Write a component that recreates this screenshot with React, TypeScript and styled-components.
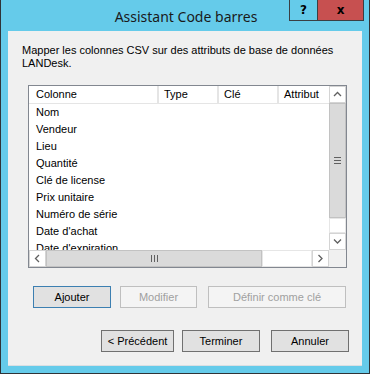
import React from "react";
import styled, { createGlobalStyle } from "styled-components";

const GlobalStyle = createGlobalStyle`
  html, body {
    margin: 0;
    padding: 0;
    background: #ffffff;
  }
  body {
    font-family: "Liberation Sans", Arial, sans-serif;
  }
`;

const Window = styled.div`
  box-sizing: border-box;
  width: 370px;
  height: 374px;
  background: #65cbea;
  border-left: 1px solid #2f3337;
  border-right: 1px solid #2f3337;
  border-bottom: 1px solid #2f3337;
  display: flex;
  flex-direction: column;
`;

const TitleBar = styled.div`
  height: 31px;
  flex: none;
  display: grid;
  grid-template-columns: 1fr auto 1fr;
  align-items: center;
`;

const Title = styled.div`
  grid-column: 2;
  font-family: "Noto Sans", "Open Sans", sans-serif;
  font-size: 14px;
  color: #1a1a1a;
  white-space: nowrap;
  padding: 1px 0 0 2px;
`;

const CaptionButtons = styled.div`
  grid-column: 3;
  justify-self: end;
  align-self: start;
  margin-right: 5px;
  display: flex;
`;

const CaptionButton = styled.div<{ $close?: boolean; $width: number }>`
  box-sizing: border-box;
  width: ${(p) => p.$width}px;
  height: 21px;
  border: 1px solid #3a3f44;
  border-top: none;
  margin-left: ${(p) => (p.$close ? "-1px" : "0")};
  background: ${(p) => (p.$close ? "#c75050" : "transparent")};
  display: flex;
  align-items: center;
  justify-content: center;
  font-family: "DejaVu Sans", sans-serif;
  font-weight: bold;
  font-size: 12px;
  color: #000;
`;

const Content = styled.div`
  flex: 1;
  margin: 0 7px 7px 7px;
  background: #f0f0f0;
  border-bottom: 1px solid #d9dfe3;
  padding: 13px 13px 0 14px;
  display: flex;
  flex-direction: column;
  font-size: 11px;
  color: #000;
`;

const Description = styled.div`
  line-height: 13px;
  width: 326px;
`;

const ListView = styled.div`
  box-sizing: border-box;
  margin: 15px 0 0 6px;
  width: 319px;
  height: 183px;
  border: 1px solid #828790;
  background: #fff;
  display: grid;
  grid-template-columns: 300px 17px;
  grid-template-rows: 164px 17px;
`;

const DataArea = styled.div`
  overflow: hidden;
`;

const HeaderRow = styled.div`
  display: flex;
  height: 18px;
  box-sizing: border-box;
  border-bottom: 1px solid #e5e5e5;
  white-space: nowrap;
`;

const HeaderCell = styled.div<{ $width?: number; $pad: number }>`
  box-sizing: border-box;
  flex: ${(p) => (p.$width ? `0 0 ${p.$width}px` : "1 0 60px")};
  padding-left: ${(p) => p.$pad}px;
  border-right: ${(p) => (p.$width ? "2px solid #e5e5e5" : "none")};
  line-height: 17px;
`;

const Row = styled.div`
  height: 17px;
  line-height: 17px;
  padding-left: 7px;
  white-space: nowrap;
`;

const VScroll = styled.div`
  display: flex;
  flex-direction: column;
  background: #fff;
`;

const HScroll = styled.div`
  display: flex;
  background: #fff;
`;

const ArrowButton = styled.div`
  box-sizing: border-box;
  flex: 0 0 17px;
  width: 17px;
  height: 17px;
  border: 1px solid #d4d4d4;
  background: #fff;
  display: flex;
  align-items: center;
  justify-content: center;
`;

const Thumb = styled.div<{ $size: number; $vertical?: boolean }>`
  box-sizing: border-box;
  flex: 0 0 ${(p) => p.$size}px;
  ${(p) => (p.$vertical ? "width: 17px;" : "height: 17px;")}
  background: #dadada;
  border: 1px solid #c2c2c2;
  display: flex;
  align-items: center;
  justify-content: center;
`;

const Track = styled.div`
  flex: 1;
  box-sizing: border-box;
  border: 1px solid #e6e6e6;
  background: #fff;
`;

const Corner = styled.div`
  background: #f0f0f0;
`;

const ButtonRow = styled.div<{ $end?: boolean; $top: number }>`
  display: flex;
  justify-content: ${(p) => (p.$end ? "flex-end" : "flex-start")};
  margin-top: ${(p) => p.$top}px;
  padding-left: ${(p) => (p.$end ? 0 : 11)}px;
`;

const Button = styled.div<{
  $width: number;
  $gap?: number;
  $variant?: "default" | "disabled" | "normal";
}>`
  box-sizing: border-box;
  width: ${(p) => p.$width}px;
  height: 22px;
  margin-left: ${(p) => p.$gap ?? 0}px;
  display: flex;
  align-items: center;
  justify-content: center;
  font-size: 11px;
  border: 1px solid
    ${(p) =>
      p.$variant === "default"
        ? "#3c7fb1"
        : p.$variant === "disabled"
        ? "#bfbfbf"
        : "#707070"};
  background: ${(p) => (p.$variant === "disabled" ? "#f4f4f4" : "#e1e1e1")};
  color: ${(p) => (p.$variant === "disabled" ? "#a0a0a0" : "#000")};
`;

const Chevron = ({ dir }: { dir: "up" | "down" | "left" | "right" }) => {
  const paths = {
    up: "M1 5 L4.5 1.5 L8 5",
    down: "M1 1.5 L4.5 5 L8 1.5",
    left: "M5 1 L1.5 4.5 L5 8",
    right: "M1.5 1 L5 4.5 L1.5 8",
  };
  const horizontal = dir === "up" || dir === "down";
  return (
    <svg
      width={horizontal ? 9 : 7}
      height={horizontal ? 7 : 9}
      viewBox={horizontal ? "0 0 9 7" : "0 0 7 9"}
    >
      <path d={paths[dir]} fill="none" stroke="#606060" strokeWidth="1.3" />
    </svg>
  );
};

const Grip = ({ vertical }: { vertical?: boolean }) => (
  <svg width={7} height={7} viewBox="0 0 7 7">
    {vertical
      ? [0.5, 3.5, 6.5].map((y) => (
          <line key={y} x1="0" x2="7" y1={y} y2={y} stroke="#606060" />
        ))
      : [0.5, 3.5, 6.5].map((x) => (
          <line key={x} y1="0" y2="7" x1={x} x2={x} stroke="#606060" />
        ))}
  </svg>
);

const rows = [
  "Nom",
  "Vendeur",
  "Lieu",
  "Quantité",
  "Clé de license",
  "Prix unitaire",
  "Numéro de série",
  "Date d'achat",
  "Date d'expiration",
];

export default function App() {
  return (
    <>
      <GlobalStyle />
      <Window>
        <TitleBar>
          <Title>Assistant Code barres</Title>
          <CaptionButtons>
            <CaptionButton $width={29}>?</CaptionButton>
            <CaptionButton $width={47} $close>
              x
            </CaptionButton>
          </CaptionButtons>
        </TitleBar>
        <Content>
          <Description>
            Mapper les colonnes CSV sur des attributs de base de données
            LANDesk.
          </Description>
          <ListView>
            <DataArea>
              <HeaderRow>
                <HeaderCell $width={130} $pad={7}>
                  Colonne
                </HeaderCell>
                <HeaderCell $width={60} $pad={5}>
                  Type
                </HeaderCell>
                <HeaderCell $width={60} $pad={5}>
                  Clé
                </HeaderCell>
                <HeaderCell $pad={5}>Attribut</HeaderCell>
              </HeaderRow>
              {rows.map((r) => (
                <Row key={r}>{r}</Row>
              ))}
            </DataArea>
            <VScroll>
              <ArrowButton>
                <Chevron dir="up" />
              </ArrowButton>
              <Thumb $size={115} $vertical>
                <Grip vertical />
              </Thumb>
              <Track />
              <ArrowButton>
                <Chevron dir="down" />
              </ArrowButton>
            </VScroll>
            <HScroll>
              <ArrowButton>
                <Chevron dir="left" />
              </ArrowButton>
              <Thumb $size={216}>
                <Grip />
              </Thumb>
              <Track />
              <ArrowButton>
                <Chevron dir="right" />
              </ArrowButton>
            </HScroll>
            <Corner />
          </ListView>
          <ButtonRow $top={18}>
            <Button $width={78} $variant="default">
              Ajouter
            </Button>
            <Button $width={77} $gap={9} $variant="disabled">
              Modifier
            </Button>
            <Button $width={138} $gap={11} $variant="disabled">
              Définir comme clé
            </Button>
          </ButtonRow>
          <ButtonRow $top={22} $end>
            <Button $width={73}>&lt; Précédent</Button>
            <Button $width={78} $gap={8}>
              Terminer
            </Button>
            <Button $width={78} $gap={11}>
              Annuler
            </Button>
          </ButtonRow>
        </Content>
      </Window>
    </>
  );
}
